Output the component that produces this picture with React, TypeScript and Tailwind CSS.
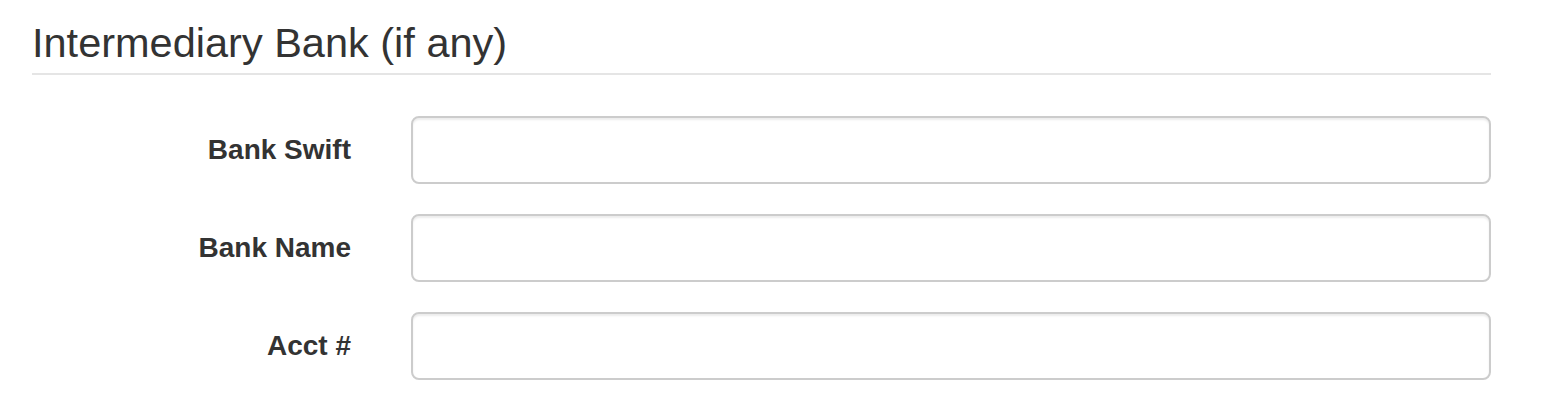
import React from 'react';

const fields = ['Bank Swift', 'Bank Name', 'Acct #'];

const App = () => {
  return (
    <div className="min-h-[400px] bg-white pl-[32px] pr-[59px] pt-[13px] text-[#333] font-['Helvetica_Neue','Liberation_Sans',Arial,sans-serif]">
      <fieldset>
        <legend className="w-full border-b-2 border-[#e5e5e5] text-[41.5px] leading-[60px] mb-[41px]">
          Intermediary Bank (if any)
        </legend>
        <div className="flex flex-col gap-[30px]">
          {fields.map((label) => (
            <div key={label} className="flex items-start gap-[60px]">
              <label className="w-[319px] shrink-0 pt-[14px] text-right text-[28px] leading-[40px] font-bold">
                {label}
              </label>
              <input
                type="text"
                className="h-[68px] flex-1 rounded-[8px] border-2 border-[#ccc] bg-white px-[24px] text-[28px] shadow-[inset_0_2px_2px_rgba(0,0,0,0.075)] outline-none"
              />
            </div>
          ))}
        </div>
      </fieldset>
    </div>
  );
};

export default App;
